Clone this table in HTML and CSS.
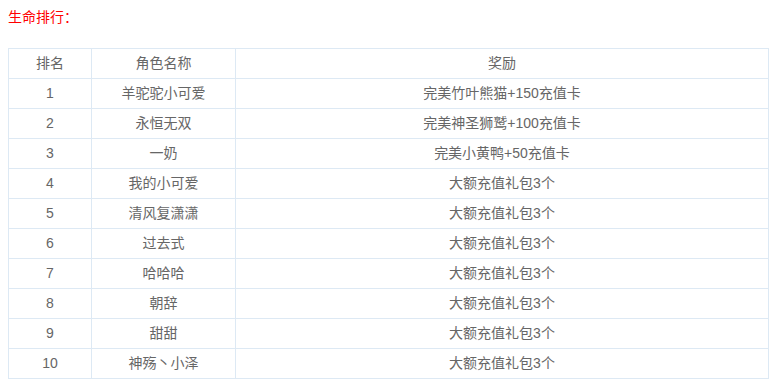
FILE: index.html
```html
<!DOCTYPE html>
<html lang="zh-CN">
<head>
<meta charset="utf-8">
<title>生命排行</title>
<link rel="stylesheet" href="styles.css">
</head>
<body>
<div class="title">生命排行：</div>
<table class="rank">
  <colgroup>
    <col class="c1">
    <col class="c2">
    <col class="c3">
  </colgroup>
  <thead>
    <tr><th>排名</th><th>角色名称</th><th>奖励</th></tr>
  </thead>
  <tbody>
    <tr><td>1</td><td>羊驼驼小可爱</td><td>完美竹叶熊猫+150充值卡</td></tr>
    <tr><td>2</td><td>永恒无双</td><td>完美神圣狮鹫+100充值卡</td></tr>
    <tr><td>3</td><td>一奶</td><td>完美小黄鸭+50充值卡</td></tr>
    <tr><td>4</td><td>我的小可爱</td><td>大额充值礼包3个</td></tr>
    <tr><td>5</td><td>清风复潇潇</td><td>大额充值礼包3个</td></tr>
    <tr><td>6</td><td>过去式</td><td>大额充值礼包3个</td></tr>
    <tr><td>7</td><td>哈哈哈</td><td>大额充值礼包3个</td></tr>
    <tr><td>8</td><td>朝辞</td><td>大额充值礼包3个</td></tr>
    <tr><td>9</td><td>甜甜</td><td>大额充值礼包3个</td></tr>
    <tr><td>10</td><td>神殇丶小泽</td><td>大额充值礼包3个</td></tr>
  </tbody>
</table>
</body>
</html>
```
FILE: styles.css
```css
body {
  margin: 8px;
  background: #fff;
  font-family: "Liberation Sans", "Noto Sans CJK SC", sans-serif;
  font-size: 14px;
  color: #666;
}
.title {
  color: #f00;
  line-height: 18px;
  margin-bottom: 22px;
}
.rank {
  border-collapse: collapse;
  table-layout: fixed;
  width: 761px;
}
.rank .c1 { width: 83px; }
.rank .c2 { width: 144px; }
.rank th,
.rank td {
  border: 1px solid #dde9f4;
  padding: 0;
  height: 29px;
  line-height: 29px;
  text-align: center;
  font-weight: normal;
  color: #666;
  white-space: nowrap;
}
```
